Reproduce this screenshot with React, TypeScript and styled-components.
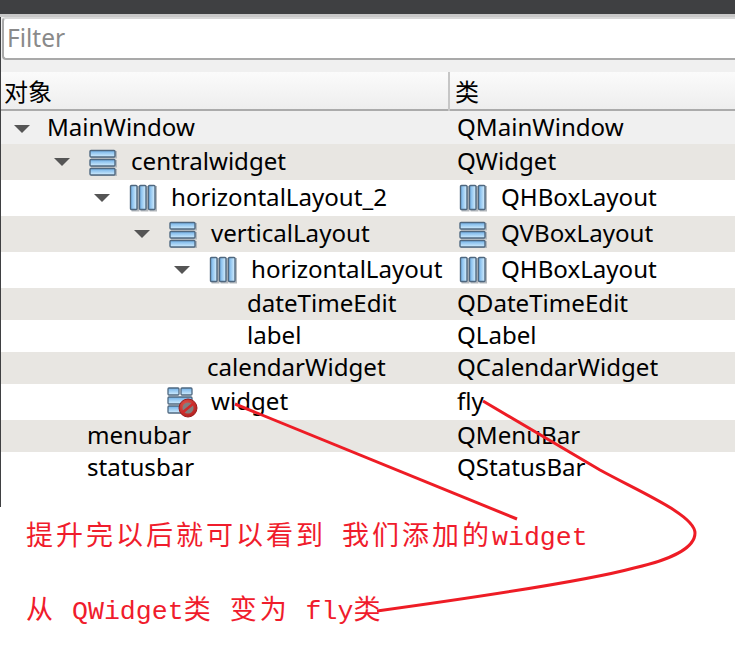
import * as React from "react";
import styled, { createGlobalStyle } from "styled-components";

const GlobalStyle = createGlobalStyle`
  html, body {
    margin: 0;
    padding: 0;
    background: #fff;
  }
  #root {
    width: 735px;
    height: 658px;
    overflow: hidden;
  }
`;

const Page = styled.div`
  position: relative;
  width: 735px;
  height: 658px;
  overflow: hidden;
  font-family: "Noto Sans", "Noto Sans CJK SC", sans-serif;
  color: #000;
`;

const TopBar = styled.div`
  height: 14px;
  background: #3f4042;
  border-bottom: 3px solid #c8c8c8;
`;

const Panel = styled.div`
  height: 490px;
  border-left: 1px solid #3f4042;
  display: flex;
  flex-direction: column;
`;

const FilterWrap = styled.div`
  height: 55px;
  padding: 0 0 0 1px;
  background: #f0f0f0;
  box-sizing: border-box;
`;

const FilterBox = styled.div`
  height: 43px;
  box-sizing: border-box;
  background: #fff;
  border: 2px solid #a9a9a9;
  border-top-color: #d8d8d8;
  border-right: none;
  border-radius: 4px 0 0 4px;
  padding-left: 3px;
  font-size: 24.5px;
  line-height: 37px;
  color: #8a8a8a;
`;

const Header = styled.div`
  display: grid;
  grid-template-columns: 447px 1fr;
  height: 39px;
  box-sizing: border-box;
  background: linear-gradient(#fbfbfb, #eeeeee);
  border-bottom: 2px solid #ababab;
`;

const HeaderCell = styled.div<{ $divider?: boolean }>`
  font-size: 24px;
  line-height: 40px;
  padding-left: ${(p) => (p.$divider ? "5px" : "3px")};
  border-left: ${(p) => (p.$divider ? "2px solid #c6c6c6" : "none")};
`;

const Row = styled.div<{ $bg: string; $h: number }>`
  display: grid;
  grid-template-columns: 449px 1fr;
  height: ${(p) => p.$h}px;
  background: ${(p) => p.$bg};
  font-size: 24.1px;
  line-height: ${(p) => p.$h - 2}px;
`;

const NameCell = styled.div<{ $indent: number }>`
  display: flex;
  align-items: flex-start;
  padding-left: ${(p) => p.$indent}px;
  white-space: nowrap;
`;

const ClassCell = styled.div<{ $plain: boolean }>`
  display: flex;
  align-items: flex-start;
  padding-left: ${(p) => (p.$plain ? 7 : 9)}px;
  white-space: nowrap;
`;

const Arrow = styled.span<{ $gap: number }>`
  width: 0;
  height: 0;
  border-left: 8px solid transparent;
  border-right: 8px solid transparent;
  border-top: 8px solid #555;
  margin-top: 14px;
  margin-right: ${(p) => p.$gap}px;
  flex: none;
`;

const IconSlot = styled.span<{ $gap: number; $top: number }>`
  display: flex;
  flex: none;
  margin-top: ${(p) => p.$top}px;
  margin-right: ${(p) => p.$gap}px;
`;

const Note = styled.div`
  padding: 10px 0 0 26px;
  height: 150px;
  box-sizing: border-box;
  color: #f01c2c;
  font-family: "Liberation Mono", "Noto Sans CJK SC", monospace;
  font-size: 26.6px;
`;

const NoteLine = styled.div`
  height: 74px;
  line-height: 34px;
  white-space: pre;
`;

const Cjk = styled.span`
  font-family: "Noto Sans CJK SC", sans-serif;
  font-size: 27px;
  font-weight: 400;
  letter-spacing: 3px;
`;

const Scribble = styled.svg`
  position: absolute;
  left: 0;
  top: 0;
  pointer-events: none;
`;

const Bars: React.FC<{ vertical?: boolean }> = ({ vertical }) => (
  <svg width="28" height="28" viewBox="0 0 28 28">
    <defs>
      <linearGradient id="barH" x1="0" y1="0" x2="0" y2="1">
        <stop offset="0" stopColor="#6fb0e8" />
        <stop offset="1" stopColor="#d4eefe" />
      </linearGradient>
      <linearGradient id="barV" x1="0" y1="0" x2="1" y2="0">
        <stop offset="0" stopColor="#6fb0e8" />
        <stop offset="1" stopColor="#d8f0fe" />
      </linearGradient>
    </defs>
    {[0, 1, 2].map((i) =>
      vertical ? (
        <g key={i}>
          <rect x={2.5 + i * 9} y="2" width="8" height="25.5" fill="#b4b8bc" />
          <rect x={1.5 + i * 9} y="1.5" width="6.5" height="24" rx="1" fill="url(#barV)" stroke="#4f6880" strokeWidth="1.4" />
        </g>
      ) : (
        <g key={i}>
          <rect x="2" y={3 + i * 9} width="26" height="7.5" fill="#b4b8bc" />
          <rect x="1" y={2.5 + i * 9} width="25" height="6.5" rx="1" fill="url(#barH)" stroke="#4f6880" strokeWidth="1.4" />
        </g>
      )
    )}
  </svg>
);

const BrokenIcon: React.FC = () => (
  <svg width="32" height="32" viewBox="0 0 32 32">
    <defs>
      <linearGradient id="barB" x1="0" y1="0" x2="0" y2="1">
        <stop offset="0" stopColor="#6fb0e8" />
        <stop offset="1" stopColor="#d4eefe" />
      </linearGradient>
      <radialGradient id="stop" cx="0.4" cy="0.35" r="0.8">
        <stop offset="0" stopColor="#e8584e" />
        <stop offset="1" stopColor="#a81414" />
      </radialGradient>
    </defs>
    <rect x="1" y="2" width="11" height="7" rx="1" fill="url(#barB)" stroke="#4f6880" strokeWidth="1.3" />
    <rect x="14" y="2" width="11" height="7" rx="1" fill="url(#barB)" stroke="#4f6880" strokeWidth="1.3" />
    <rect x="1" y="11" width="24" height="7" rx="1" fill="url(#barB)" stroke="#4f6880" strokeWidth="1.3" />
    <rect x="1" y="20" width="24" height="7" rx="1" fill="url(#barB)" stroke="#4f6880" strokeWidth="1.3" />
    <circle cx="21" cy="22" r="9" fill="url(#stop)" stroke="#9a1c1c" />
    <circle cx="21" cy="22" r="5.5" fill="#808080" />
    <path d="M15 27 L27 17" stroke="#d02a2a" strokeWidth="2.6" />
  </svg>
);

type TreeRow = {
  name: string;
  cls: string;
  indent: number;
  bg: string;
  h: number;
  arrow?: boolean;
  icon?: "v" | "h" | "broken";
  clsIcon?: "v" | "h";
};

const GREY = "#e8e6e2";
const WHITE = "#ffffff";

const rows: TreeRow[] = [
  { name: "MainWindow", cls: "QMainWindow", indent: 13, bg: "#f0f0f0", h: 33, arrow: true },
  { name: "centralwidget", cls: "QWidget", indent: 53, bg: GREY, h: 36, arrow: true, icon: "v" },
  { name: "horizontalLayout_2", cls: "QHBoxLayout", indent: 93, bg: WHITE, h: 36, arrow: true, icon: "h", clsIcon: "h" },
  { name: "verticalLayout", cls: "QVBoxLayout", indent: 133, bg: GREY, h: 36, arrow: true, icon: "v", clsIcon: "v" },
  { name: "horizontalLayout", cls: "QHBoxLayout", indent: 173, bg: WHITE, h: 36, arrow: true, icon: "h", clsIcon: "h" },
  { name: "dateTimeEdit", cls: "QDateTimeEdit", indent: 246, bg: GREY, h: 32 },
  { name: "label", cls: "QLabel", indent: 246, bg: WHITE, h: 32 },
  { name: "calendarWidget", cls: "QCalendarWidget", indent: 206, bg: GREY, h: 32 },
  { name: "widget", cls: "fly", indent: 166, bg: WHITE, h: 36, icon: "broken" },
  { name: "menubar", cls: "QMenuBar", indent: 86, bg: GREY, h: 32 },
  { name: "statusbar", cls: "QStatusBar", indent: 86, bg: WHITE, h: 32 },
];

const renderIcon = (icon: TreeRow["icon"]) => {
  if (icon === "broken") return <IconSlot $gap={12} $top={2}><BrokenIcon /></IconSlot>;
  if (icon === "v") return <IconSlot $gap={14} $top={4}><Bars /></IconSlot>;
  if (icon === "h") return <IconSlot $gap={14} $top={4}><Bars vertical /></IconSlot>;
  return null;
};

export default function App() {
  return (
    <Page>
      <GlobalStyle />
      <TopBar />
      <Panel>
        <FilterWrap>
          <FilterBox>Filter</FilterBox>
        </FilterWrap>
        <Header>
          <HeaderCell>对象</HeaderCell>
          <HeaderCell $divider>类</HeaderCell>
        </Header>
        {rows.map((r) => (
          <Row key={r.name} $bg={r.bg} $h={r.h}>
            <NameCell $indent={r.indent}>
              {r.arrow ? <Arrow $gap={r.icon ? 19 : 17} /> : null}
              {renderIcon(r.icon)}
              {r.name}
            </NameCell>
            <ClassCell $plain={!r.clsIcon}>
              {r.clsIcon ? renderIcon(r.clsIcon) : null}
              {r.cls}
            </ClassCell>
          </Row>
        ))}
      </Panel>
      <Note>
        <NoteLine>
          <Cjk>提升完以后就可以看到</Cjk> <Cjk>我们添加的</Cjk>widget
        </NoteLine>
        <NoteLine>
          <Cjk>从</Cjk> QWidget<Cjk>类</Cjk> <Cjk>变为</Cjk> fly<Cjk>类</Cjk>
        </NoteLine>
      </Note>
      <Scribble width="735" height="658" viewBox="0 0 735 658" fill="none">
        <path d="M235 404 L517 519" stroke="#ee1c25" strokeWidth="3" />
        <path
          d="M483 401 L600 470 C640 492 695 515 695 533 C695 548 670 560 634 568 C590 580 500 594 377 611"
          stroke="#ee1c25"
          strokeWidth="3"
        />
      </Scribble>
    </Page>
  );
}
